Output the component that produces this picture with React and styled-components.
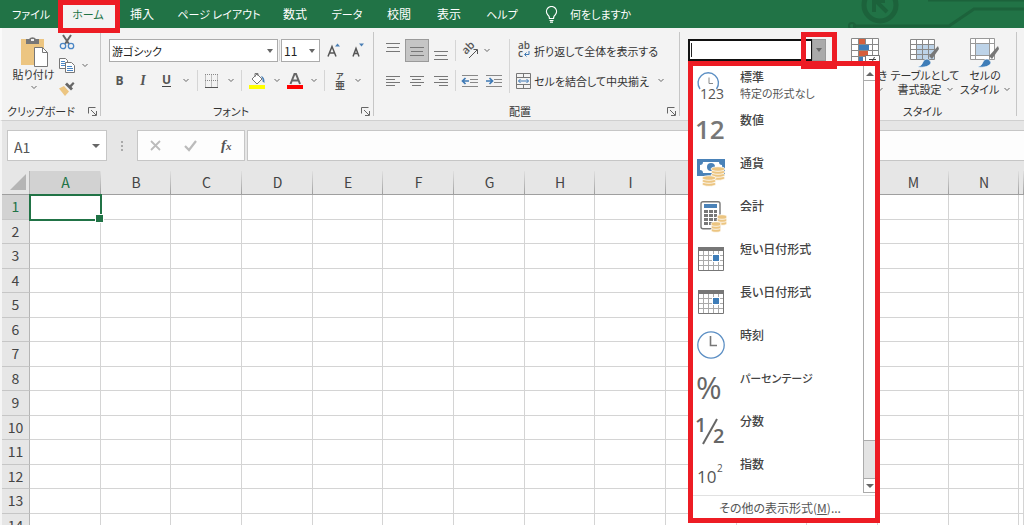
import React from "react";
import styled, { createGlobalStyle } from "styled-components";

const GlobalStyle = createGlobalStyle`
* {
  box-sizing: border-box;
}

body {
  margin: 0;
  background: #e6e6e6;
  color: #444;
  font-family: "Noto Sans CJK JP", sans-serif;
  font-size: 12px;
  line-height: 14px;
  font-feature-settings: "palt";
}

button, input, select {
  font: inherit;
  color: inherit;
  font-feature-settings: inherit;
}
`;

const Page = styled.div`
height: 100vh;
display: flex;
flex-direction: column;
overflow: hidden;
`;

/* ---------- tabs ---------- */

const TabBar = styled.nav`
position: relative;
height: 28px;
flex: none;
display: flex;
align-items: center;
padding-left: 2px;
background: #217346;
`;

const Circuit = styled.svg`
position: absolute;
right: 0;
top: 0;
`;

const Tab = styled.a`
position: relative;
width: ${(p) => p.$width}px;
height: 28px;
line-height: 28px;
font-size: ${(p) => (p.$small ? 11 : 12)}px;
text-align: center;
white-space: nowrap;
text-decoration: none;
color: ${(p) => (p.$active ? "#217346" : "#fff")};
background: ${(p) => (p.$active ? "#f3f3f3" : "transparent")};
`;

const RedFrame = styled.span`
position: absolute;
inset: ${(p) => p.$inset};
border: 5px solid #ed1c24;
z-index: 3;
pointer-events: none;
`;

const TellMe = styled.button`
display: flex;
align-items: center;
gap: 12px;
margin-left: 15px;
padding: 0;
border: 0;
background: none;
color: #fff;
font-size: 11px;
`;

/* ---------- ribbon ---------- */

const Ribbon = styled.div`
flex: none;
display: flex;
height: 93px;
padding-top: 4px;
background: #f3f3f3;
border-bottom: 1px solid #d0d0d0;
border-left: 2px solid #fafafa;
font-size: 11px;
`;

const Group = styled.section`
position: relative;
flex: 0 0 ${(p) => p.$width}px;
min-width: 0;
height: 84px;
display: flex;
flex-direction: column;
justify-content: space-between;
padding: ${(p) => p.$pad || "0"};
border-right: 1px solid ${(p) => (p.$open ? "transparent" : "#c6c6c6")};
`;

const GroupFooter = styled.div`
display: flex;
align-items: center;
height: 14px;
margin-bottom: -2px;
padding-right: 3px;
color: #333;
`;

const GroupName = styled.span`
flex: 1;
padding-right: 8px;
text-align: center;
white-space: nowrap;
`;

const Launcher = styled.button`
width: 9px;
height: 9px;
padding: 0;
border: 0;
background: none;
display: flex;
`;

const Row = styled.div`
display: flex;
align-items: center;
height: ${(p) => p.$height || 23}px;
`;

const Stack = styled.div`
display: flex;
flex-direction: column;
gap: ${(p) => p.$gap || 0}px;
`;

const Tool = styled.button`
display: flex;
align-items: center;
justify-content: center;
flex: none;
width: ${(p) => p.$width || 24}px;
height: 23px;
padding: 0;
border: 1px solid ${(p) => (p.$on ? "#9a9a9a" : "transparent")};
background: ${(p) => (p.$on ? "#c5c5c5" : "none")};
color: #555;

svg {
  overflow: visible;
}
`;

const LabelTool = styled.button`
display: flex;
align-items: center;
gap: 3px;
height: 23px;
padding: 0 0 0 3px;
border: 0;
background: none;
color: #333;
white-space: nowrap;

svg {
  overflow: visible;
}
`;

const BigTool = styled.button`
display: flex;
flex-direction: column;
align-items: center;
flex: none;
width: ${(p) => p.$width}px;
padding: 0 0 0 ${(p) => p.$indent || 0}px;
border: 0;
background: none;
color: #333;
white-space: nowrap;

svg {
  flex: none;
}
`;

const BigLine = styled.span`
display: flex;
align-items: center;
gap: 5px;
height: 14px;
`;

const Letter = styled.span`
font-family: ${(p) => (p.$italic ? '"Liberation Serif", serif' : '"Open Sans", sans-serif')};
font-size: ${(p) => p.$size || 12}px;
font-weight: ${(p) => p.$weight || 400};
font-style: ${(p) => (p.$italic ? "italic" : "normal")};
border-bottom: ${(p) => (p.$under ? "1px solid #444" : "0")};
line-height: 12px;
color: #555;
`;

const Divider = styled.span`
flex: none;
width: 1px;
height: ${(p) => p.$height || 21}px;
margin: 0 ${(p) => p.$space || 0}px;
background: #d5d5d5;
`;

const SelectBox = styled.span`
position: relative;
display: flex;
width: ${(p) => p.$width}px;
height: 23px;
border: 1px solid #ababab;
background: #fff;
font-size: ${(p) => p.$size || 11}px;

select {
  appearance: none;
  width: 100%;
  padding: 0 2px;
  border: 0;
  background: none;
  color: #222;
}

svg {
  position: absolute;
  right: 4px;
  top: 9px;
  pointer-events: none;
}
`;

/* ---------- number format list ---------- */

const FormatBox = styled.div`
position: relative;
display: flex;
width: 138px;
height: 22px;
font-size: 12px;
`;

const FormatInput = styled.input`
flex: 1;
min-width: 0;
padding: 0 1px;
border: 2px solid #111;
border-right-width: 1px;
background: #fff;
outline: 0;
`;

const FormatButton = styled.button`
width: 14px;
padding: 0;
border: 1px solid #999;
background: #aaa;
display: flex;
align-items: center;
justify-content: center;
`;

const Caret = styled.span`
position: absolute;
left: 3px;
top: 4px;
width: 1px;
height: 14px;
background: #222;
`;

const FormatMenu = styled.div`
position: absolute;
top: 22px;
left: 0;
z-index: 2;
width: 192px;
border: 5px solid #ed1c24;
background: #fff;
`;

const FormatBody = styled.div`
display: flex;
height: 430px;
overflow: hidden;
border-bottom: 1px solid #e1e1e1;
`;

const FormatList = styled.ul`
flex: 1;
margin: 0;
padding: 0;
list-style: none;
`;

const FormatItem = styled.li`
display: flex;
gap: 13px;
height: 43px;
padding: 3px 0 0 4px;
`;

const FormatIcon = styled.span`
display: flex;
align-items: center;
justify-content: center;
width: 28px;
height: 36px;

svg {
  flex: none;
  overflow: visible;
}
`;

const FormatText = styled.span`
padding-left: 2px;
color: #555;
font-size: 11px;
line-height: 16px;
white-space: nowrap;

b {
  display: block;
  height: 16px;
  font-size: ${(p) => (p.$small ? 11 : 12)}px;
  font-weight: 500;
  color: #444;
}
`;

const ScrollBar = styled.div`
width: 12px;
height: 427px;
display: flex;
flex-direction: column;
border-left: 1px solid #ababab;
background: #e3e3e3;
`;

const ScrollButton = styled.button`
flex: none;
height: 15px;
padding: 0;
border: 0;
border-top: 1px solid ${(p) => (p.$first ? "#fff" : "#ababab")};
border-bottom: 1px solid #ababab;
background: #fff;
display: flex;
align-items: center;
justify-content: center;
`;

const ScrollThumb = styled.div`
flex: 1;
margin-bottom: 37px;
background: #fff;
border-bottom: 1px solid #ababab;
`;

const MoreFormats = styled.button`
display: block;
width: 100%;
height: 22px;
padding: 2px 8px 0 0;
border: 0;
background: #fff;
color: #555;
white-space: nowrap;
`;

/* ---------- formula bar ---------- */

const FormulaBar = styled.div`
flex: none;
display: flex;
height: 50px;
padding: 9px 0 10px 5px;
border-left: 2px solid #f5f5f5;
`;

const NameBox = styled.div`
display: flex;
align-items: center;
width: 100px;
padding-right: 6px;
border: 1px solid #c6c6c6;
background: #fff;

input {
  flex: 1;
  min-width: 0;
  padding: 3px 6px 0;
  border: 0;
  background: none;
  color: #555;
  font-size: 14px;
}
`;

const Dots = styled.span`
display: flex;
flex-direction: column;
justify-content: center;
gap: 2px;
width: 2px;
margin: 0 14px;

i {
  height: 2px;
  background: #aaa;
}
`;

const FormulaTools = styled.div`
display: flex;
align-items: center;
justify-content: space-around;
width: 108px;
margin-right: 2px;
border: 1px solid #c6c6c6;
background: #fdfdfd;
`;

const Fx = styled.span`
font-family: "Liberation Serif", serif;
font-size: 15px;
font-weight: 700;
font-style: italic;
color: #555;

small {
  font-size: 11px;
}
`;

const FormulaInput = styled.input`
flex: 1;
min-width: 0;
border: 1px solid #c6c6c6;
border-right: 0;
background: #fdfdfd;
`;

/* ---------- sheet ---------- */

const SheetArea = styled.div`
flex: 1;
min-height: 0;
overflow: hidden;
border-left: 2px solid #f5f5f5;
`;

const Sheet = styled.table`
width: 100%;
table-layout: fixed;
border-collapse: separate;
border-spacing: 0;
background: #fff;
`;

const Col = styled.col`
width: ${(p) => (p.$width ? p.$width + "px" : "auto")};
`;

const ColHead = styled.th`
height: 24px;
padding: 0 0 2px;
font-size: 14px;
font-weight: 400;
color: ${(p) => (p.$on ? "#217346" : "#444")};
background: linear-gradient(#e0e0e0, #9f9f9f) right / 1px 100% no-repeat ${(p) => (p.$on ? "#d2d2d2" : "#e6e6e6")};
border-bottom: 1px solid #9f9f9f;
`;

const Corner = styled.th`
padding: 0 3px 2px 0;
background: #e6e6e6;
border-right: 1px solid #b5b5b5;
border-bottom: 1px solid #9f9f9f;

svg {
  display: block;
  margin-left: auto;
}
`;

const RowHead = styled.th`
height: ${(p) => p.$height}px;
padding: 0 0 2px;
font-size: 14px;
font-weight: 400;
color: ${(p) => (p.$on ? "#217346" : "#444")};
background: ${(p) => (p.$on ? "#d2d2d2" : "#e6e6e6")};
border-right: 1px solid #b5b5b5;
border-bottom: 1px solid #c6c6c6;
`;

const Cell = styled.td`
padding: 0;
border-right: 1px solid #d4d4d4;
border-bottom: 1px solid #d4d4d4;
`;

const ActiveCell = styled(Cell)`
position: relative;

&:before {
  content: "";
  position: absolute;
  inset: -1px -2px -2px -1px;
  border: 2px solid #217346;
}

&:after {
  content: "";
  position: absolute;
  right: -4px;
  bottom: -4px;
  width: 7px;
  height: 7px;
  border: 1px solid #fff;
  background: #217346;
}
`;

/* ---------- drawings ---------- */

const Chevron = () => (
  <svg width="6" height="5" viewBox="0 0 6 5">
    <path d="M.5 1 3 3.500 5.500 1" fill="none" stroke="#666" />
  </svg>
);

const Triangle = ({ up, width = 6 }) => (
  <svg width={width} height="4" viewBox="0 0 6 4" preserveAspectRatio="none">
    <path d={up ? "M0 4 3 0 6 4z" : "M0 0h6L3 4z"} fill="#666" />
  </svg>
);

const LauncherIcon = () => (
  <svg width="9" height="9" viewBox="0 0 9 9" fill="none" stroke="#666">
    <path d="M.5 6.500v-6h7M3 3l5 5M8.500 4v4.500H4" />
  </svg>
);

const PasteIcon = () => (
  <svg width="28" height="31" viewBox="0 0 28 31">
    <path d="M1 3h23v26H1z" fill="#ecc581" />
    <path d="M6 3h3a4 3.500 0 0 1 7 0h3v5H6z" fill="#777" />
    <path d="M11 3h3v2h-3z" fill="#f3f3f3" />
    <path d="M14.500 11.500h8l5 5v14h-13z" fill="#fff" stroke="#777" />
    <path d="M22.500 11.500v5h5" fill="none" stroke="#777" />
  </svg>
);

const ScissorsIcon = () => (
  <svg width="16" height="16" viewBox="0 0 16 16" fill="none">
    <path d="m4 1 6 9M12 1 6 10" stroke="#666" strokeWidth="2" />
    <circle cx="4" cy="12" r="2.700" stroke="#4a86c5" strokeWidth="1.300" />
    <circle cx="12" cy="12" r="2.700" stroke="#4a86c5" strokeWidth="1.300" />
  </svg>
);

const CopyIcon = () => (
  <svg width="16" height="15" viewBox="0 0 16 15" fill="#fff" stroke="#777">
    <path d="M.5.5h6l2 2v8h-8z" />
    <path d="M2 3.500h4M2 5.500h4M2 7.500h4" stroke="#4a86c5" />
    <path d="M6.500 4.500h6l3 3v7h-9z" />
    <path d="M8 8.500h5M8 10.500h6M8 12.500h6" stroke="#4a86c5" />
  </svg>
);

const PainterIcon = () => (
  <svg width="16" height="15" viewBox="0 0 16 15">
    <path d="M0 7.500 5 5l5 5.500L6 15z" fill="#ecc581" />
    <path d="m6 3.500 6 6 2-2-6-6z" fill="#666" />
    <path d="m10 5 4-4 1.500 1.500L12 6.500z" fill="#666" />
  </svg>
);

const BordersIcon = () => (
  <svg width="14" height="14" viewBox="0 0 14 14" fill="none" stroke="#888">
    <path d="M.5.500v13M6.500.500v13M12.500.500v13M0 .5h13M0 6.500h13" strokeDasharray="1 1" />
    <path d="M0 13.500h13" stroke="#555" />
  </svg>
);

const FillIcon = () => (
  <svg width="17" height="17" viewBox="0 0 17 17">
    <path d="M0 13h16v4H0z" fill="#ff0" />
    <path d="m3 7 5-5 5 5-5 5z" fill="#fff" stroke="#777" />
    <path d="M6 5V1.500h3V4" fill="none" stroke="#777" />
    <path d="M12 4q4 1 3.500 7l-2-1.500V7z" fill="#4a7fb5" />
  </svg>
);

const FontColorIcon = () => (
  <svg width="17" height="17" viewBox="0 0 17 17">
    <path d="m3.500 12 4-10h1.500l4 10M5 8.500h6.500" fill="none" stroke="#666" strokeWidth="2" />
    <path d="M0 13h16v4H0z" fill="red" />
  </svg>
);

const SizeIcon = ({ up }) => (
  <svg width="14" height="15" viewBox="0 0 14 15">
    <path d={up ? "m1 13.500 4-10 4 10M2.500 10h5" : "m2 13.500 3-8 3 8M3 10.500h4"} fill="none" stroke="#555" strokeWidth="1.500" />
    <path d={up ? "m8 3.500 2.500-3 2.500 3z" : "m8 .500 2.500 3 2.500-3z"} fill="#4a7fb5" />
  </svg>
);

const Lines = ({ rows, top = 0, gap = 4 }) => (
  <svg width="14" height="20" viewBox="0 0 14 20" stroke="#777">
    {rows.map(([x, w], i) => (
      <path key={i} d={`M${x} ${top + i * gap + 0.5}h${w}`} />
    ))}
  </svg>
);

const OrientIcon = () => (
  <svg width="17" height="16" viewBox="0 0 17 16" fill="none" stroke="#555">
    <text transform="translate(4 12) rotate(-45)" fontFamily="Open Sans, sans-serif" fontSize="11" fontWeight="600" fill="#555" stroke="none">
      ab
    </text>
    <path d="m7 15 8-8M11.500 6.500h4V11" />
  </svg>
);

const IndentIcon = ({ right }) => (
  <svg width="16" height="14" viewBox="0 0 16 14">
    <path d="M0 1.500h16M8 5.500h8M8 8.500h8M0 12.500h16" stroke="#888" />
    <path d={right ? "M0 7h6M3.500 4 6.500 7 3.500 10" : "M1 7h6M3.500 4 .500 7l3 3"} fill="none" stroke="#3e79b5" strokeWidth="1.700" />
  </svg>
);

const WrapIcon = () => (
  <svg width="15" height="17" viewBox="0 0 15 17">
    <text x="2" y="7" fontFamily="Open Sans, sans-serif" fontSize="10" fontWeight="600" fill="#555">ab</text>
    <text x="2" y="15" fontFamily="Open Sans, sans-serif" fontSize="10" fontWeight="600" fill="#555">c</text>
    <path d="M13 9v3.500H9M10.500 10.500l-2 2 2 2" fill="none" stroke="#3e79b5" />
  </svg>
);

const MergeIcon = () => (
  <svg width="15" height="16" viewBox="0 0 15 16" fill="none" stroke="#777">
    <path d="M.5.5h14v15H.5zM.5 4.500h14M.5 11.500h14M7.500.5v4M7.500 11.500v4" />
    <path d="M2.500 8h10M4.500 6l-2 2 2 2M10.500 6l2 2-2 2" stroke="#3e79b5" />
  </svg>
);

const Brush = () => (
  <>
    <path d="m28 8-9 10 3 3 7-10z" fill="#777" />
    <path d="M7 29q5-1 6-5 1-3 4-3t4 4q-2 5-14 4z" fill="#3e7db8" stroke="#fff" strokeWidth=".6" />
  </>
);

const TableStyleIcon = () => (
  <svg width="30" height="30" viewBox="0 0 30 30">
    <path d="M.5 1.500h24v20H.5z" fill="#fff" />
    <path d="M7 6h17v15H7z" fill="#bdd3e8" />
    <path d="M.5 1.500h24v20H.5zM.5 6.500h24M.5 11.500h24M.5 16.500h24M6.500 1.500v20M12.500 1.500v20M18.500 1.500v20" fill="none" stroke="#888" />
    <Brush />
  </svg>
);

const CellStyleIcon = () => (
  <svg width="30" height="30" viewBox="0 0 30 30">
    <path d="M.5.5h24v21H.5zM.5 5.500h24M.5 17.500h24M5.500.5v21M19.500.5v21" fill="#fff" stroke="#999" />
    <path d="M6 6h13v11H6z" fill="#bdd3e8" />
    <Brush />
  </svg>
);

const ConditionalIcon = () => (
  <svg width="30" height="30" viewBox="0 0 30 30">
    <path d="M.5.5h27v25H.5z" fill="#fff" />
    <path d="M.5.5h27v25H.5zM.5 6.500h27M.5 12.500h27M.5 18.500h27M7.500.5v25M14.500.5v25M21.500.5v25" fill="none" stroke="#888" />
    <path d="M8 1h6v5H8zM8 13h9v5H8z" fill="#d65f3c" />
    <path d="M8 7h10v5H8zM8 19h4v6H8z" fill="#3e7db8" />
    <path d="M14.500 17.500h14v12h-14z" fill="#fff" stroke="#777" />
    <path d="M18 21.500h7M18 24.500h7M23.500 19l-4 8" stroke="#444" />
  </svg>
);

const BulbIcon = () => (
  <svg width="13" height="17" viewBox="0 0 13 17" fill="none" stroke="#fff" strokeWidth="1.200">
    <path d="M4.500 12.500Q4.500 10 2.500 8.500A5 5 0 1 1 10.500 8.500Q8.500 10 8.500 12.500zM4.500 14.500h4M5 16.200h3" />
  </svg>
);

const Coins = ({ x, y, n = 3, rx = 7 }) => (
  <g transform={`translate(${x} ${y})`} fill="#ecc581" stroke="#fff" strokeWidth=".8">
    {Array.from({ length: n }, (_, i) => (
      <ellipse key={i} cx={rx} cy={(n - i) * 3} rx={rx} ry="2.300" />
    ))}
  </g>
);

const MoneyIcon = () => (
  <svg width="28" height="28" viewBox="0 0 28 28">
    <path d="M0 0h28v17H0z" fill="#4a82b8" />
    <path d="M6 3h16q0 3 3 3v5q-3 0-3 3H6q0-3-3-3V6q3 0 3-3z" fill="#fff" />
    <circle cx="14" cy="8" r="4" fill="#4a82b8" />
    <Coins x="14" y="7" n={4} />
    <Coins x="5" y="16" />
  </svg>
);

const CalculatorIcon = () => (
  <svg width="28" height="30" viewBox="0 0 28 30">
    <rect x="4" y=".7" width="19" height="27" rx="2" fill="#fff" stroke="#777" strokeWidth="1.400" />
    <path d="M7 3h13v4H7z" fill="#4a82b8" />
    {[9, 13, 17, 21].map((y) => (
      <path key={y} d={`M7 ${y}h4v3H7zM12 ${y}h4v3h-4zM17 ${y}h3v3h-3z`} fill="#777" />
    ))}
    <Coins x="20" y="13" rx={5} />
    <Coins x="14" y="20" rx={5} />
  </svg>
);

const CalendarIcon = () => (
  <svg width="26" height="25" viewBox="0 0 26 25">
    <path d="M.5.5h25v23H.5z" fill="#fff" stroke="#777" />
    <path d="M5.500 4v19M10.500 4v19M15.500 4v19M20.500 4v19M1 8.500h24M1 13.500h24M1 18.500h24" stroke="#aaa" />
    <path d="M0 0h26v4H0z" fill="#777" />
    <path d="M14 7h8v8h-8z" fill="#fff" />
    <path d="M15 8h6v6h-6z" fill="#3e7db8" />
  </svg>
);

const ClockIcon = () => (
  <svg width="28" height="28" viewBox="0 0 28 28" fill="none">
    <circle cx="14" cy="14" r="13.200" stroke="#5c8fc4" strokeWidth="1.300" />
    <path d="M13.500 5v9.500H20" stroke="#777" strokeWidth="1.600" />
  </svg>
);

const GeneralIcon = () => (
  <svg width="28" height="30" viewBox="0 0 28 30" fill="none">
    <path d="M3 17A10.200 10.200 0 1 1 19.500 17" stroke="#5c8fc4" strokeWidth="1.400" />
    <path d="M12 5.500v6H16" stroke="#888" />
    <text x="3" y="27" fontFamily="Open Sans, sans-serif" fontSize="14" fill="#555">123</text>
  </svg>
);

const NumberIcon = () => (
  <svg width="28" height="28" viewBox="0 0 28 28">
    <text x="-2" y="23" fontFamily="Open Sans, sans-serif" fontSize="26" fontWeight="600" fill="#777">12</text>
  </svg>
);

const PercentIcon = () => (
  <svg width="28" height="28" viewBox="0 0 28 28">
    <text x="-1" y="25" fontFamily="Open Sans, sans-serif" fontSize="31" fontWeight="500" fill="#666">%</text>
  </svg>
);

const FractionIcon = () => (
  <svg width="28" height="28" viewBox="0 0 28 28">
    <text x="-2" y="15" fontFamily="Open Sans, sans-serif" fontSize="20" fontWeight="600" fill="#666">1</text>
    <path d="M20 2 6 27" stroke="#666" strokeWidth="2" />
    <text x="16" y="26" fontFamily="Open Sans, sans-serif" fontSize="20" fontWeight="600" fill="#666">2</text>
  </svg>
);

const ExponentIcon = () => (
  <svg width="28" height="28" viewBox="0 0 28 28">
    <text x="0" y="23" fontFamily="Open Sans, sans-serif" fontSize="17" fill="#555">10</text>
    <text x="20" y="12" fontFamily="Open Sans, sans-serif" fontSize="10" fill="#555">2</text>
  </svg>
);

const CircuitArt = () => (
  <Circuit width="184" height="28" viewBox="0 0 184 28" fill="none" stroke="#1c623b">
    <circle cx="40" cy="5" r="16" strokeWidth="5" />
    <path d="M34 12V-1M35 0l12 12M35 1h10" strokeWidth="4" />
    <path d="M13 26h96L134 9h50M88 0h96" strokeWidth="3" />
    <circle cx="12" cy="26" r="3" strokeWidth="2" />
  </Circuit>
);

const tabs = [
  ["ファイル", 58],
  ["ホーム", 56],
  ["挿入", 52],
  ["ページ レイアウト", 102],
  ["数式", 50],
  ["データ", 54],
  ["校閲", 50],
  ["表示", 50],
  ["ヘルプ", 56],
];

const formats = [
  ["標準", GeneralIcon, "特定の形式なし"],
  ["数値", NumberIcon],
  ["通貨", MoneyIcon],
  ["会計", CalculatorIcon],
  ["短い日付形式", CalendarIcon],
  ["長い日付形式", CalendarIcon],
  ["時刻", ClockIcon],
  ["パーセンテージ", PercentIcon],
  ["分数", FractionIcon],
  ["指数", ExponentIcon],
];

const columns = "ABCDEFGHIJKLMN".split("");
const rows = Array.from({ length: 14 }, (_, i) => i + 1);

const bars = [[0, 14], [1, 12], [0, 14]];

const isKana = (text) => /^[ァ-ヶー ]+$/.test(text);

function Footer({ children }) {
  return (
    <GroupFooter>
      <GroupName>{children}</GroupName>
      <Launcher aria-label={children}><LauncherIcon /></Launcher>
    </GroupFooter>
  );
}

function ClipboardGroup() {
  return (
    <Group $width={99} $pad="2px 0 0">
      <Row $height={62}>
        <BigTool $width={56} $indent={7}>
          <PasteIcon />
          <BigLine>貼り付け</BigLine>
          <BigLine><Chevron /></BigLine>
        </BigTool>
        <Stack>
          <Tool $width={18} aria-label="切り取り"><ScissorsIcon /></Tool>
          <Row>
            <Tool $width={18} aria-label="コピー"><CopyIcon /></Tool>
            <Tool $width={17} aria-label="コピーのオプション"><Chevron /></Tool>
          </Row>
          <Tool $width={18} aria-label="書式のコピー"><PainterIcon /></Tool>
        </Stack>
      </Row>
      <Footer>クリップボード</Footer>
    </Group>
  );
}

function FontGroup() {
  return (
    <Group $width={273} $pad="7px 0 0 8px">
      <Stack $gap={7}>
        <Row>
          <SelectBox $width={169}>
            <select aria-label="フォント名"><option>游ゴシック</option></select>
            <Triangle />
          </SelectBox>
          <Divider $space={1} />
          <SelectBox $width={39} $size={12}>
            <select aria-label="フォント サイズ"><option>11</option></select>
            <Triangle />
          </SelectBox>
          <Tool $width={28} aria-label="拡大"><SizeIcon up /></Tool>
          <Tool $width={20} aria-label="縮小"><SizeIcon /></Tool>
        </Row>
        <Row>
          <Tool $width={21}><Letter $weight={700}>B</Letter></Tool>
          <Tool $width={26}><Letter $size={14} $weight={700} $italic>I</Letter></Tool>
          <Tool $width={21}><Letter $weight={700} $under>U</Letter></Tool>
          <Tool $width={17} aria-label="下線のオプション"><Chevron /></Tool>
          <Divider $space={3} />
          <Tool $width={22} aria-label="罫線"><BordersIcon /></Tool>
          <Tool $width={15} aria-label="罫線のオプション"><Chevron /></Tool>
          <Divider $space={3} />
          <Tool $width={25} aria-label="塗りつぶし"><FillIcon /></Tool>
          <Tool $width={13} aria-label="塗りつぶしの色"><Chevron /></Tool>
          <Tool $width={24} aria-label="フォントの色"><FontColorIcon /></Tool>
          <Tool $width={13} aria-label="色のオプション"><Chevron /></Tool>
          <Divider $space={4} />
          <Tool $width={22} aria-label="ふりがな">
            <svg width="14" height="20" viewBox="0 0 14 20" fill="#555" fontFamily="Noto Sans CJK JP, sans-serif" fontWeight="700">
              <text x="3" y="8" fontSize="8">ア</text>
              <text x="2" y="18" fontSize="10">亜</text>
            </svg>
          </Tool>
          <Tool $width={14} aria-label="ふりがなのオプション"><Chevron /></Tool>
        </Row>
      </Stack>
      <Footer>フォント</Footer>
    </Group>
  );
}

function AlignGroup() {
  return (
    <Group $width={306} $pad="7px 0 0 7px">
      <Row $height={53}>
        <Stack $gap={7}>
          <Row>
            <Tool aria-label="上揃え"><Lines rows={bars} top={2} /></Tool>
            <Tool $on aria-label="上下中央揃え"><Lines rows={bars} top={6} /></Tool>
            <Tool aria-label="下揃え"><Lines rows={bars} top={10} /></Tool>
            <Divider $space={2} />
            <Tool aria-label="方向"><OrientIcon /></Tool>
            <Tool $width={10} aria-label="方向のオプション"><Chevron /></Tool>
          </Row>
          <Row>
            <Tool aria-label="左揃え"><Lines rows={[[0, 14], [0, 9], [0, 14], [0, 9]]} top={5} gap={3} /></Tool>
            <Tool aria-label="中央揃え"><Lines rows={[[0, 14], [2, 9], [0, 14], [2, 9]]} top={5} gap={3} /></Tool>
            <Tool aria-label="右揃え"><Lines rows={[[0, 14], [5, 9], [0, 14], [5, 9]]} top={5} gap={3} /></Tool>
            <Divider $space={2} />
            <Tool aria-label="インデントを減らす"><IndentIcon /></Tool>
            <Tool aria-label="インデントを増やす"><IndentIcon right /></Tool>
          </Row>
        </Stack>
        <Divider $height={54} $space={3} />
        <Stack $gap={7}>
          <LabelTool><WrapIcon />折り返して全体を表示する</LabelTool>
          <Row>
            <LabelTool><MergeIcon />セルを結合して中央揃え</LabelTool>
            <Tool aria-label="結合のオプション"><Chevron /></Tool>
          </Row>
        </Stack>
      </Row>
      <Footer>配置</Footer>
    </Group>
  );
}

function NumberGroup() {
  return (
    <Group as="div" $width={160} $open $pad="7px 0 0 8px">
      <FormatBox>
        <FormatInput aria-label="表示形式" />
        <Caret />
        <FormatButton aria-label="表示形式を開く"><Triangle /></FormatButton>
        <RedFrame $inset="-7px -11px -8px 113px" />
        <FormatMenu>
          <FormatBody>
            <FormatList>
              {formats.map(([name, Icon, note]) => (
                <FormatItem key={name}>
                  <FormatIcon><Icon /></FormatIcon>
                  <FormatText $small={isKana(name)}><b>{name}</b>{note}</FormatText>
                </FormatItem>
              ))}
            </FormatList>
            <ScrollBar>
              <ScrollButton $first aria-label="上へ"><Triangle up width={8} /></ScrollButton>
              <ScrollThumb />
              <ScrollButton aria-label="下へ"><Triangle width={8} /></ScrollButton>
            </ScrollBar>
          </FormatBody>
          <MoreFormats>その他の表示形式(<u>M</u>)...</MoreFormats>
        </FormatMenu>
      </FormatBox>
    </Group>
  );
}

function StyleGroup() {
  return (
    <Group $width={177} $pad="4px 0 0">
      <Row $height={62}>
        <BigTool $width={52}>
          <ConditionalIcon />
          <BigLine>条件付き</BigLine>
          <BigLine>書式 <Chevron /></BigLine>
        </BigTool>
        <BigTool $width={66}>
          <TableStyleIcon />
          <BigLine>テーブルとして</BigLine>
          <BigLine>書式設定 <Chevron /></BigLine>
        </BigTool>
        <BigTool $width={54}>
          <CellStyleIcon />
          <BigLine>セルの</BigLine>
          <BigLine>スタイル <Chevron /></BigLine>
        </BigTool>
      </Row>
      <GroupFooter><GroupName>スタイル</GroupName></GroupFooter>
    </Group>
  );
}

function App() {
  return (
    <Page>
      <GlobalStyle />
      <TabBar>
        <CircuitArt />
        {tabs.map(([name, width], i) => (
          <Tab key={name} href="#" $width={width} $active={i === 1} $small={isKana(name)}>
            {name}
            {i === 1 && <RedFrame $inset="0 -4px -5px -2px" />}
          </Tab>
        ))}
        <TellMe><BulbIcon />何をしますか</TellMe>
      </TabBar>
      <Ribbon>
        <ClipboardGroup />
        <FontGroup />
        <AlignGroup />
        <NumberGroup />
        <StyleGroup />
      </Ribbon>
      <FormulaBar>
        <NameBox>
          <input aria-label="名前ボックス" defaultValue="A1" />
          <Triangle width={8} />
        </NameBox>
        <Dots><i /><i /><i /></Dots>
        <FormulaTools>
          <Tool aria-label="キャンセル">
            <svg width="11" height="11" viewBox="0 0 11 11"><path d="m1 1 9 9M10 1l-9 9" stroke="#bbb" strokeWidth="1.800" /></svg>
          </Tool>
          <Tool aria-label="入力">
            <svg width="13" height="11" viewBox="0 0 13 11"><path d="m1 6 4 4 7-9" fill="none" stroke="#bbb" strokeWidth="2.200" /></svg>
          </Tool>
          <Tool aria-label="関数の挿入"><Fx>f<small>x</small></Fx></Tool>
        </FormulaTools>
        <FormulaInput aria-label="数式バー" />
      </FormulaBar>
      <SheetArea>
        <Sheet>
          <colgroup>
            <Col $width={28} />
            {columns.map((c, i) => <Col key={c} $width={i % 3 === 1 ? 70 : 71} />)}
            <Col />
          </colgroup>
          <thead>
            <tr>
              <Corner aria-label="すべて選択">
                <svg width="16" height="16" viewBox="0 0 16 16"><path d="M16 0v16H0z" fill="#b5b5b5" /></svg>
              </Corner>
              {columns.map((c, i) => <ColHead key={c} $on={i === 0}>{c}</ColHead>)}
              <ColHead />
            </tr>
          </thead>
          <tbody>
            {rows.map((r) => (
              <tr key={r}>
                <RowHead $on={r === 1} $height={r % 2 ? 25 : 24}>{r}</RowHead>
                {columns.map((c) => (r === 1 && c === "A" ? <ActiveCell key={c} /> : <Cell key={c} />))}
                <Cell />
              </tr>
            ))}
          </tbody>
        </Sheet>
      </SheetArea>
    </Page>
  );
}

export default App;
